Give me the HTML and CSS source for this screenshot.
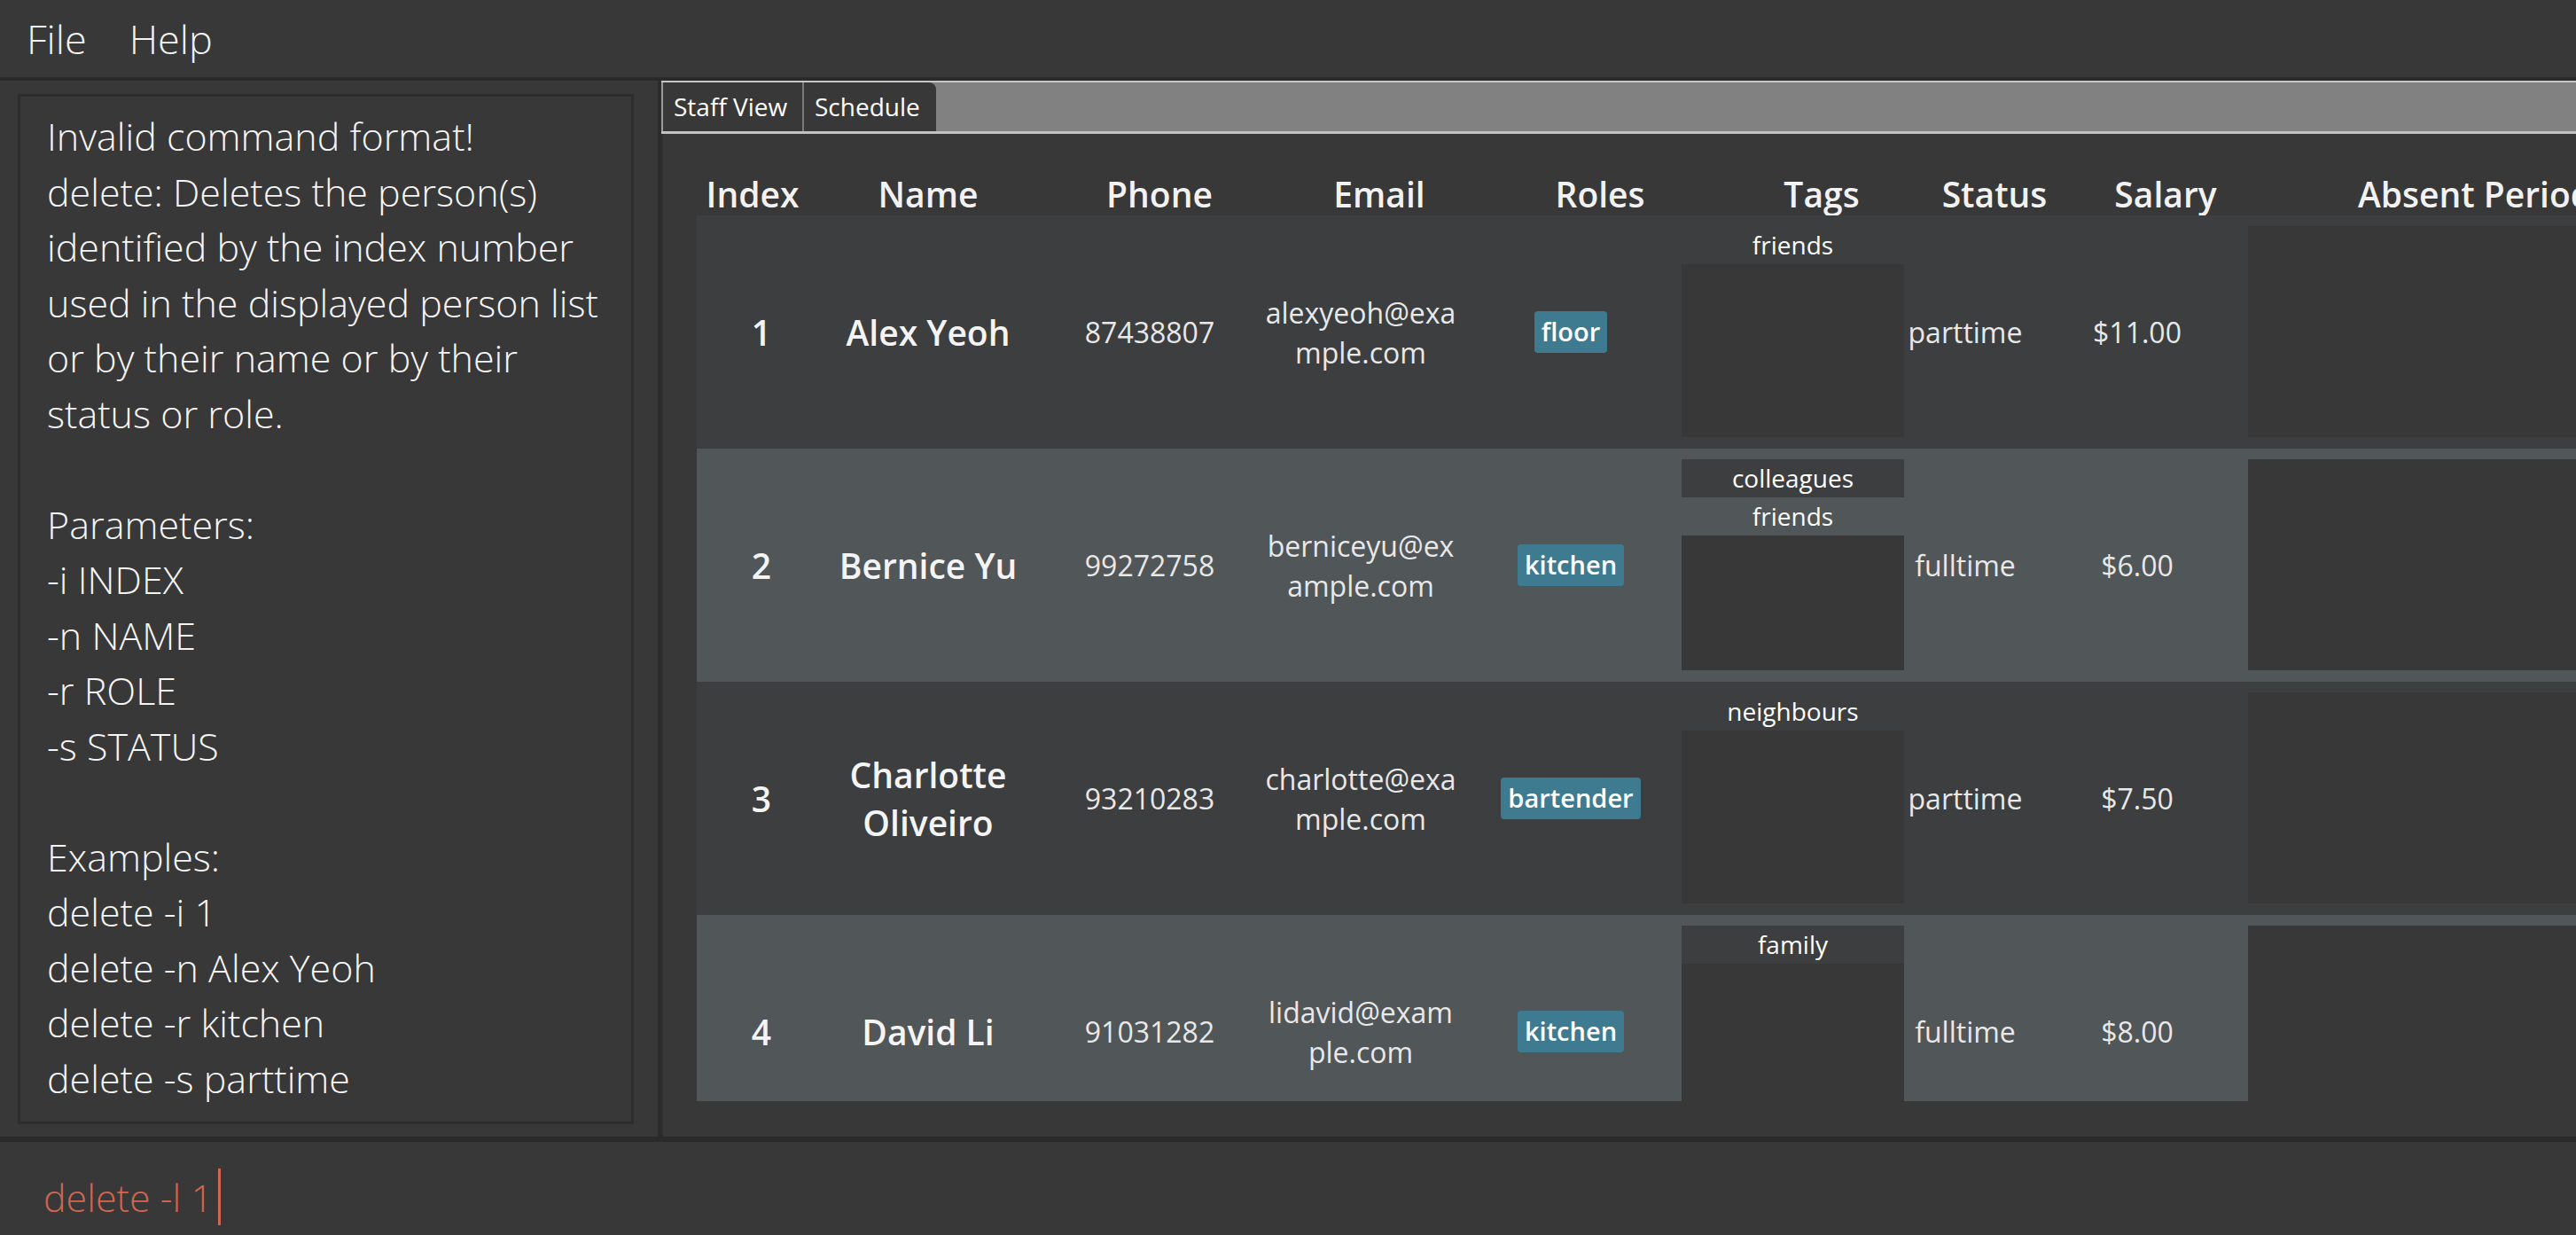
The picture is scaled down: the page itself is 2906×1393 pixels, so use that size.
FILE: index.html
```html
<!DOCTYPE html>
<html>
<head>
<meta charset="utf-8">
<link rel="stylesheet" href="styles.css">
</head>
<body>
<div class="app">
  <div class="menubar"><span class="menu">File</span><span class="menu">Help</span></div>
  <div class="main">
    <div class="left">
      <div class="result">Invalid command format!
delete: Deletes the person(s)
identified by the index number
used in the displayed person list
or by their name or by their
status or role.

Parameters:
-i INDEX
-n NAME
-r ROLE
-s STATUS

Examples:
delete -i 1
delete -n Alex Yeoh
delete -r kitchen
delete -s parttime</div>
    </div>
    <div class="divider"></div>
    <div class="right">
      <div class="tabbar">
        <div class="tab first">Staff View</div>
        <div class="tab last">Schedule</div>
      </div>
      <div class="content">
        <div class="thead">
          <div class="th">Index</div>
          <div class="th">Name</div>
          <div class="th">Phone</div>
          <div class="th">Email</div>
          <div class="th">Roles</div>
          <div class="th">Tags</div>
          <div class="th">Status</div>
          <div class="th">Salary</div>
          <div class="th">Absent Period</div>
        </div>
        <div class="list">
          <div class="row even">
            <div class="cell big">1</div>
            <div class="cell big">Alex Yeoh</div>
            <div class="cell small">87438807</div>
            <div class="cell small email">alexyeoh@exa<br>mple.com</div>
            <div class="cell roles"><span class="badge">floor</span></div>
            <div class="tags"><div class="tag t-even">friends</div></div>
            <div class="cell small">parttime</div>
            <div class="cell small">$11.00</div>
            <div class="absent"></div>
          </div>
          <div class="row odd">
            <div class="cell big">2</div>
            <div class="cell big">Bernice Yu</div>
            <div class="cell small">99272758</div>
            <div class="cell small email">berniceyu@ex<br>ample.com</div>
            <div class="cell roles"><span class="badge">kitchen</span></div>
            <div class="tags"><div class="tag t-even">colleagues</div><div class="tag t-odd">friends</div></div>
            <div class="cell small">fulltime</div>
            <div class="cell small">$6.00</div>
            <div class="absent"></div>
          </div>
          <div class="row even">
            <div class="cell big">3</div>
            <div class="cell big">Charlotte Oliveiro</div>
            <div class="cell small">93210283</div>
            <div class="cell small email">charlotte@exa<br>mple.com</div>
            <div class="cell roles"><span class="badge">bartender</span></div>
            <div class="tags"><div class="tag t-even">neighbours</div></div>
            <div class="cell small">parttime</div>
            <div class="cell small">$7.50</div>
            <div class="absent"></div>
          </div>
          <div class="row odd">
            <div class="cell big">4</div>
            <div class="cell big">David Li</div>
            <div class="cell small">91031282</div>
            <div class="cell small email">lidavid@exam<br>ple.com</div>
            <div class="cell roles"><span class="badge">kitchen</span></div>
            <div class="tags"><div class="tag t-even">family</div></div>
            <div class="cell small">fulltime</div>
            <div class="cell small">$8.00</div>
            <div class="absent"></div>
          </div>
        </div>
      </div>
    </div>
  </div>
  <div class="cmdbox"><span class="cmdtext">delete -l 1</span><span class="caret"></span></div>
</div>
</body>
</html>
```
FILE: styles.css
```css
html, body {
  margin: 0;
  padding: 0;
}
body {
  background: #383838;
  width: 2906px;
  height: 1393px;
  overflow: hidden;
  font-family: "Open Sans", "Liberation Sans", sans-serif;
  color: #ffffff;
}
.app {
  display: flex;
  flex-direction: column;
  width: 2906px;
  height: 1393px;
}
.menubar {
  height: 87px;
  border-bottom: 4px solid #2a2a2a;
  display: flex;
  align-items: center;
  padding-left: 30px;
  gap: 48px;
  font-weight: 300;
  font-size: 45px;
  line-height: 87px;
  color: #f2f2f2;
  box-sizing: content-box;
  flex: none;
}
.main {
  display: flex;
  height: 1191px;
  overflow: hidden;
  flex: none;
}
.left {
  width: 742px;
  flex: none;
  box-sizing: border-box;
  padding: 15px 27px 14px 20px;
  display: flex;
}
.result {
  flex: 1;
  border: 3px solid #2d2d2d;
  box-sizing: border-box;
  padding: 14px 20px 0 30px;
  white-space: pre-line;
  font-size: 43px;
  font-weight: 300;
  line-height: 62.5px;
  color: #f5f5f5;
  overflow: hidden;
}
.divider {
  width: 4px;
  flex: none;
  background: #2c2c2c;
}
.right {
  flex: 1;
  display: flex;
  flex-direction: column;
  overflow: hidden;
  min-width: 0;
}
.tabbar {
  height: 55px;
  border-top: 2px solid #c6c6c6;
  border-bottom: 3px solid #c2c2c2;
  background: #818181;
  display: flex;
  flex: none;
}
.tab {
  background: #383838;
  font-size: 28px;
  color: #ffffff;
  line-height: 55px;
  white-space: nowrap;
  box-sizing: border-box;
}
.tab.first {
  width: 161px;
  padding-left: 12px;
  border-left: 2px solid #9a9a9a;
  border-right: 2px solid #7a7a7a;
}
.tab.last {
  width: 149px;
  padding-left: 12px;
  border-top-right-radius: 8px;
}
.content {
  flex: 1;
  border-left: 2px solid #2e2e2e;
  padding-left: 38px;
  padding-bottom: 40px;
  display: flex;
  flex-direction: column;
  overflow: hidden;
}
.thead {
  display: grid;
  grid-template-columns: 126px 270px 252px 244px 254px 246px 144px 242px 456px;
  padding-top: 48px;
  padding-bottom: 4px;
  flex: none;
}
.th {
  text-align: center;
  white-space: nowrap;
  font-weight: 600;
  font-size: 39px;
  line-height: 40px;
  color: #f2f2f2;
}
.list {
  flex: 1;
  overflow: hidden;
}
.row {
  height: 263px;
  display: grid;
  grid-template-columns: 146px 230px 270px 206px 259px 251px 138px 250px 600px;
  align-items: center;
}
.row.even {
  background: #3c3e3f;
}
.row.odd {
  background: #515658;
}
.cell {
  text-align: center;
}
.big {
  font-weight: 600;
  font-size: 39px;
  line-height: 54px;
  color: #f4f4f4;
}
.small {
  font-size: 32px;
  line-height: 45px;
  color: #e8e8e8;
  white-space: nowrap;
}
.email {
  display: flex;
  flex-direction: column;
  align-items: center;
}
.roles {
  padding-left: 9px;
}
.badge {
  display: inline-block;
  background: #3e7b91;
  color: #ffffff;
  font-weight: 600;
  font-size: 29px;
  height: 47px;
  line-height: 46px;
  padding: 0 8px;
  border-radius: 4px;
}
.tags {
  align-self: stretch;
  margin: 12px 0 13px;
  background: #383838;
}
.tag {
  height: 43px;
  line-height: 43px;
  text-align: center;
  font-size: 28px;
  color: #ffffff;
}
.t-even {
  background: #3c3e3f;
}
.t-odd {
  background: #515658;
}
.absent {
  align-self: stretch;
  margin: 12px 0 13px;
  background: #383838;
}
.cmdbox {
  flex: 1;
  border-top: 6px solid #2a2a2a;
  display: flex;
  align-items: flex-start;
  padding-left: 49px;
}
.cmdtext {
  font-size: 43px;
  font-weight: 300;
  color: #d06651;
  line-height: 60px;
  margin-top: 33px;
}
.caret {
  display: inline-block;
  width: 3px;
  height: 64px;
  background: #d06651;
  margin-left: 6px;
  margin-top: 30px;
}
```
